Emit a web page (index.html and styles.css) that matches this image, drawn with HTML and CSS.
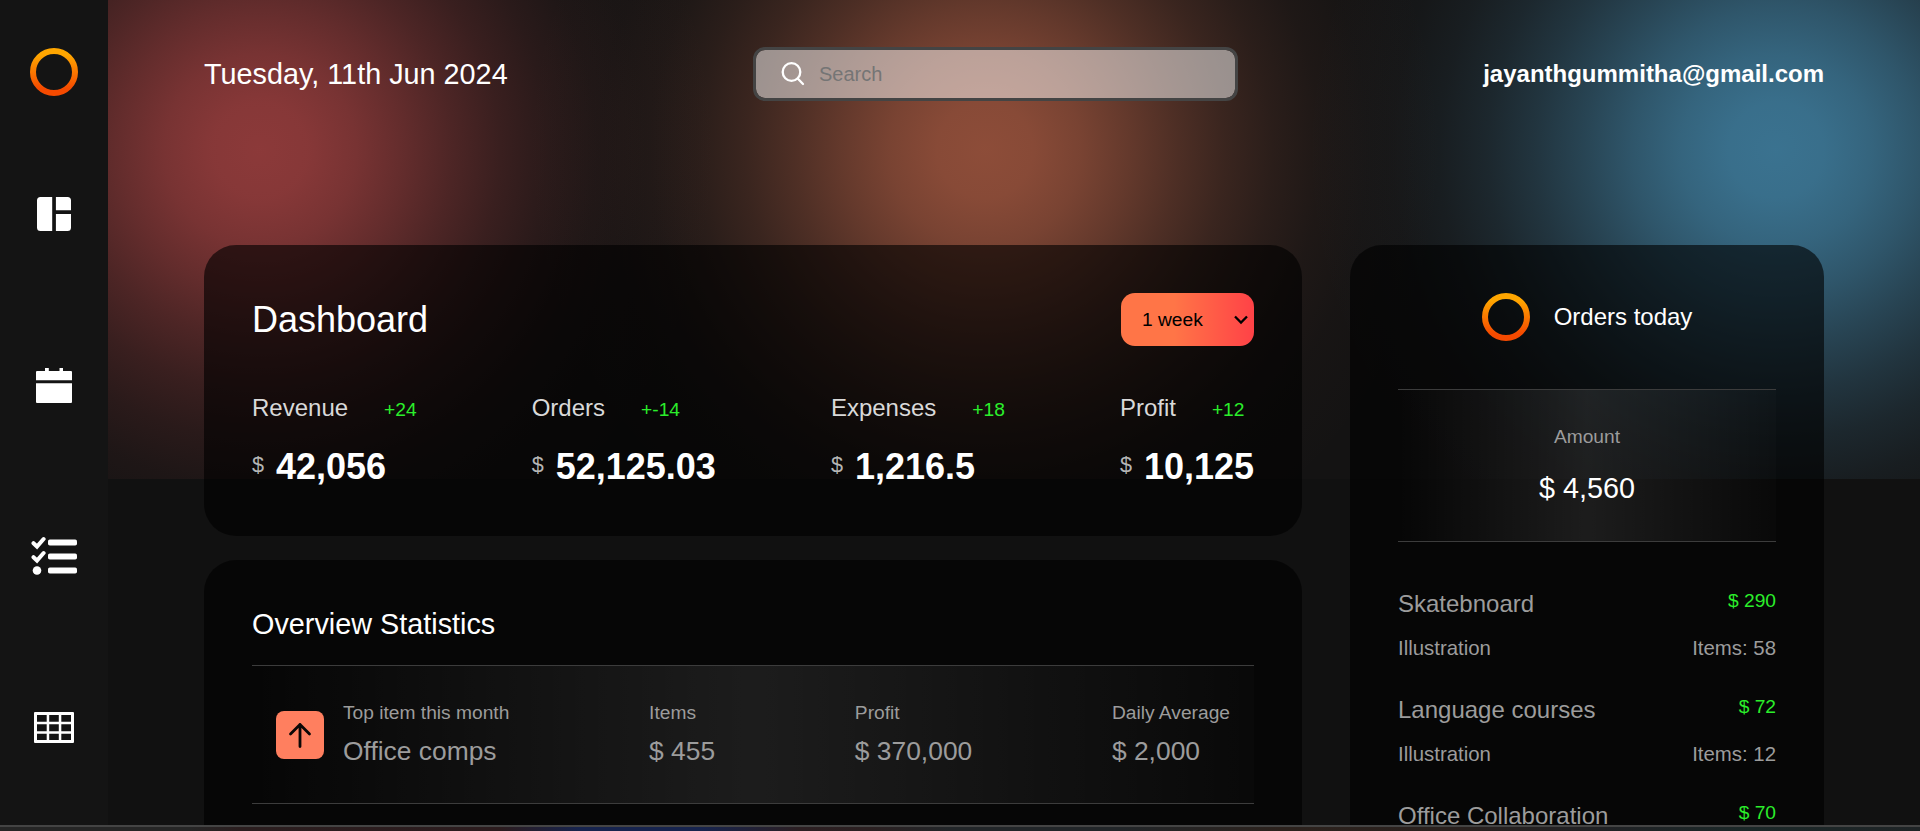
FILE: index.html
```html
<!DOCTYPE html>
<html lang="en">
<head>
<meta charset="utf-8">
<title>Dashboard</title>
<link rel="stylesheet" href="styles.css">
</head>
<body>
<div class="app">
  <nav class="sidebar">
    <svg class="ring" width="48" height="48" viewBox="0 0 48 48"><defs><linearGradient id="ring" x1="0" y1="0" x2="0" y2="1"><stop offset=".1" stop-color="#ffa600"/><stop offset=".9" stop-color="#f54a00"/></linearGradient></defs><circle cx="24" cy="24" r="21" fill="none" stroke="url(#ring)" stroke-width="6"/></svg>
    <svg class="panel-icon" width="34" height="34" viewBox="0 0 34 34" fill="#fff"><path d="M3.500 0H15.200V34H3.500A3.500 3.500 0 0 1 0 30.500V3.500A3.500 3.500 0 0 1 3.500 0ZM18.900 0H30.500A3.500 3.500 0 0 1 34 3.500V13.200H18.900ZM18.900 17H34V30.500A3.500 3.500 0 0 1 30.500 34H18.900Z"/></svg>
    <svg class="calendar-icon" width="36" height="35" viewBox="0 0 36 35" fill="#fff"><path d="M1 3H9V0H12.800V3H23.500V0H27V3H35A1 1 0 0 1 36 4V12.200H0V4A1 1 0 0 1 1 3ZM0 15.200H36V34A1 1 0 0 1 35 35H1A1 1 0 0 1 0 34Z"/></svg>
    <svg class="tasks-icon" width="46" height="40" viewBox="0 0 46 40" fill="#fff"><path d="M2.500 7.200L6 10.500L12.600 3M2.500 21.200L6 24.500L12.600 17" fill="none" stroke="#fff" stroke-width="4" stroke-linecap="round"/><circle cx="6" cy="34.500" r="4.300"/><rect x="17" y="3.500" width="29" height="6" rx="1.800"/><rect x="17" y="17.500" width="29" height="6" rx="1.800"/><rect x="17" y="31.500" width="29" height="6" rx="1.800"/></svg>
    <svg class="table-icon" width="40" height="31" viewBox="0 0 40 31"><path fill="#fff" fill-rule="evenodd" d="M1 0H39A1 1 0 0 1 40 1V30A1 1 0 0 1 39 31H1A1 1 0 0 1 0 30V1A1 1 0 0 1 1 0ZM3 3V9.700H12.700V3ZM15.200 3V9.700H24.800V3ZM27.300 3V9.700H37V3ZM3 12.200V19.200H12.700V12.200ZM15.200 12.200V19.200H24.800V12.200ZM27.300 12.200V19.200H37V12.200ZM3 21.700V28H12.700V21.700ZM15.200 21.700V28H24.800V21.700ZM27.300 21.700V28H37V21.700Z"/></svg>
  </nav>
  <main class="main">
    <header class="topbar">
      <div class="date">Tuesday, 11th Jun 2024</div>
      <label class="search">
        <svg width="24" height="24" viewBox="0 0 24 24" fill="none" stroke="#fff" stroke-width="2.300" stroke-linecap="round"><circle cx="10.500" cy="10" r="8.800"/><path d="M16.700 16.500L22 22"/></svg>
        <span>Search</span>
      </label>
      <div class="email">jayanthgummitha@gmail.com</div>
    </header>
    <div class="columns">
      <div class="left">
        <section class="card">
          <div class="card-head">
            <h1>Dashboard</h1>
            <div class="select"><span>1 week</span><svg width="14" height="10" viewBox="0 0 14 10" fill="none" stroke="#000" stroke-width="2.300"><path d="M1 1.500L7 7.500L13 1.500"/></svg></div>
          </div>
          <div class="stats">
            <div class="stat"><div class="stat-label">Revenue<span class="up">+24</span></div><div class="stat-value"><small>$</small>42,056</div></div>
            <div class="stat"><div class="stat-label">Orders<span class="up">+-14</span></div><div class="stat-value"><small>$</small>52,125.03</div></div>
            <div class="stat"><div class="stat-label">Expenses<span class="up">+18</span></div><div class="stat-value"><small>$</small>1,216.5</div></div>
            <div class="stat"><div class="stat-label">Profit<span class="up">+12</span></div><div class="stat-value"><small>$</small>10,125</div></div>
          </div>
        </section>
        <section class="card overview">
          <h2>Overview Statistics</h2>
          <div class="band summary">
            <div class="top-item">
              <div class="arrow"><svg width="24" height="26" viewBox="0 0 24 26" fill="none" stroke="#0b0706" stroke-width="2.800" stroke-linecap="round" stroke-linejoin="round"><path d="M12 24.500V2.500M2.500 12L12 2.500L21.500 12"/></svg></div>
              <div><p>Top item this month</p><b>Office comps</b></div>
            </div>
            <div><p>Items</p><b>$ 455</b></div>
            <div><p>Profit</p><b>$ 370,000</b></div>
            <div><p>Daily Average</p><b>$ 2,000</b></div>
          </div>
        </section>
      </div>
      <aside class="card orders">
        <div class="orders-head">
          <svg width="48" height="48" viewBox="0 0 48 48"><circle cx="24" cy="24" r="21" fill="none" stroke="url(#ring)" stroke-width="6"/></svg>
          <span>Orders today</span>
        </div>
        <div class="band amount"><p>Amount</p><strong>$ 4,560</strong></div>
        <div class="order"><div class="order-row"><span class="name">Skatebnoard</span><span class="up">$ 290</span></div><div class="order-meta"><span>Illustration</span><span>Items: 58</span></div></div>
        <div class="order"><div class="order-row"><span class="name">Language courses</span><span class="up">$ 72</span></div><div class="order-meta"><span>Illustration</span><span>Items: 12</span></div></div>
        <div class="order"><div class="order-row"><span class="name">Office Collaboration</span><span class="up">$ 70</span></div></div>
      </aside>
    </div>
  </main>
</div>
<div class="dock"></div>
</body>
</html>
```

FILE: styles.css
```css
* { box-sizing: border-box; margin: 0; padding: 0; }
body {
  height: 831px;
  overflow: hidden;
  display: flex;
  flex-direction: column;
  background: #111;
  color: #fff;
  font-family: "Liberation Sans", Arial, sans-serif;
}
svg { display: block; flex: none; }
.app { display: flex; height: 825px; overflow: hidden; }
.dock {
  height: 6px;
  border-top: 2px solid #444;
  background: linear-gradient(to right, #262626 0, #262626 190px, #2b1e1f 240px, #2c1c1e 500px, #17244e 580px, #17244e 700px, #2c1f22 800px, #2b2021 870px, #222629 950px, #222629 1120px, #2c221d 1280px, #2a211e 1450px, #212225 1600px, #1b2828 1750px, #1f2426 1920px);
}

.sidebar {
  width: 108px;
  flex: none;
  display: flex;
  flex-direction: column;
  align-items: center;
  padding-top: 48px;
  background: #141414;
}
.panel-icon { margin-top: 101px; }
.calendar-icon { margin-top: 137px; }
.tasks-icon { margin-top: 133px; }
.table-icon { margin-top: 136px; }

.main {
  flex: 1;
  padding: 47px 96px 0;
  background-image:
    radial-gradient(circle 480px at 152px 150px, rgba(207,79,79,.640) 0, rgba(207,79,79,.612) 48px, rgba(207,79,79,.534) 96px, rgba(207,79,79,.425) 144px, rgba(207,79,79,.305) 192px, rgba(207,79,79,.200) 240px, rgba(207,79,79,.116) 288px, rgba(207,79,79,.056) 336px, rgba(207,79,79,.020) 384px, rgba(207,79,79,0) 460px),
    radial-gradient(circle 480px at 877px 150px, rgba(209,109,78,.640) 0, rgba(209,109,78,.612) 48px, rgba(209,109,78,.534) 96px, rgba(209,109,78,.425) 144px, rgba(209,109,78,.305) 192px, rgba(209,109,78,.200) 240px, rgba(209,109,78,.116) 288px, rgba(209,109,78,.056) 336px, rgba(209,109,78,.020) 384px, rgba(209,109,78,0) 460px),
    radial-gradient(circle 480px at 1668px 150px, rgba(80,168,214,.640) 0, rgba(80,168,214,.615) 48px, rgba(80,168,214,.546) 96px, rgba(80,168,214,.448) 144px, rgba(80,168,214,.335) 192px, rgba(80,168,214,.228) 240px, rgba(80,168,214,.138) 288px, rgba(80,168,214,.070) 336px, rgba(80,168,214,.028) 384px, rgba(80,168,214,0) 470px),
    linear-gradient(#141313, #141313);
  background-size: 100% 479px;
  background-repeat: no-repeat;
}
.topbar { display: flex; justify-content: space-between; align-items: center; height: 54px; }
.date { font-size: 28.8px; }
.email { font-size: 24px; font-weight: 700; }
.search {
  display: flex;
  align-items: center;
  width: 485px;
  height: 54px;
  padding-left: 25px;
  gap: 14px;
  border: 3px solid #444;
  border-radius: 12px;
  background: rgba(255,255,255,.5);
  background-clip: padding-box;
  color: #757575;
  font-size: 20px;
}

.columns { display: flex; gap: 48px; margin-top: 144px; align-items: flex-start; }
.left { flex: 1; display: flex; flex-direction: column; gap: 24px; }
.card { padding: 48px; border-radius: 32px; background: rgba(0,0,0,.61); }
.card-head { display: flex; justify-content: space-between; align-items: center; height: 53px; }
h1 { font-size: 36px; font-weight: 400; }
h2 { font-size: 28.8px; font-weight: 400; line-height: 33px; }
.select {
  display: flex;
  justify-content: space-between;
  align-items: center;
  width: 133px;
  height: 53px;
  padding: 0 6px 0 21px;
  border-radius: 14px;
  background: linear-gradient(to right, #ff7547 0, #ff7547 40%, #ff4247 100%);
  color: #000;
  font-size: 19.2px;
}
.stats { display: flex; justify-content: space-between; margin-top: 48px; }
.stat-label { font-size: 24px; line-height: 28px; color: #d9d9d9; }
.stat-label .up { margin-left: 36px; }
.up { color: #2bee2b; font-size: 19.2px; line-height: 22px; }
.stat-value { display: flex; gap: 12px; margin-top: 24px; font-size: 36px; line-height: 42px; font-weight: 700; }
.stat-value small { font-size: 21.6px; line-height: 37px; font-weight: 400; color: #b5b5b5; }

.overview { height: 340px; }
.band {
  border: solid #3c3c3c;
  border-width: 1px 0;
  background: linear-gradient(to right, rgba(255,255,255,0), rgba(255,255,255,.09) 50%, rgba(255,255,255,.012));
  color: #9c9c9c;
}
.band p { font-size: 19.2px; line-height: 22px; }
.summary { display: flex; justify-content: space-between; margin-top: 24px; height: 139px; padding: 36px 24px; }
.summary b { display: block; margin-top: 12px; font-size: 26.4px; line-height: 31px; font-weight: 400; }
.top-item { display: flex; gap: 19px; }
.arrow { display: grid; place-items: center; width: 48px; height: 48px; margin-top: 9px; border-radius: 8px; background: #ff7f5f; }

.orders { width: 474px; height: 700px; }
.orders-head { display: flex; justify-content: center; align-items: center; gap: 24px; height: 48px; font-size: 24px; }
.amount { margin-top: 48px; margin-bottom: 48px; height: 153px; padding: 36px 0; text-align: center; }
.amount strong { display: block; margin-top: 24px; color: #fff; font-size: 28.8px; line-height: 33px; font-weight: 400; }
.order { margin-bottom: 36px; color: #9c9c9c; }
.order-row { display: flex; justify-content: space-between; align-items: flex-start; font-size: 24px; line-height: 28px; }
.order-meta { display: flex; justify-content: space-between; margin-top: 19px; font-size: 20.400px; line-height: 23px; }
```
